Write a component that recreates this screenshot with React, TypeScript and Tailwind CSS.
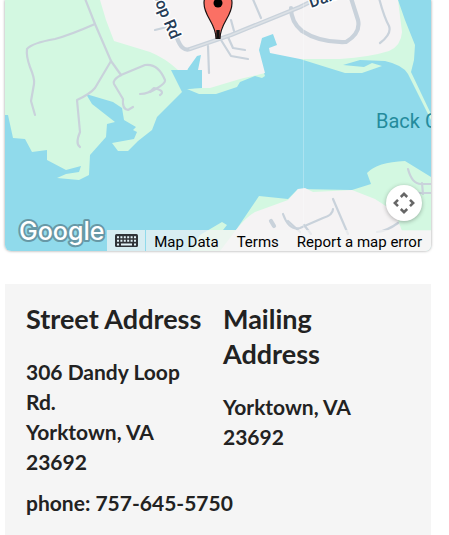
const roads = [
  'M84 -4 L95 24 L111 61 L121 75',
  'M95 24 Q70 35 55 39 Q32 43 27 49 Q26 56 30 67 Q35 79 34 84 L31 101 L35 115',
  'M111 61 L95 88 Q90 94 77 100 L80 132 Q75 144 80 147',
  'M121 75 L145 65 Q158 63 165 80 Q166 84 150 92',
  'M121 75 Q112 80 114 84 L123 99 Q122 109 128 110 L133 107',
  'M140 94 Q149 94 154 88 Q166 91 160 95',
  'M155 30 L167 27',
  'M208 46 L209 73',
  'M221 40 L231 56 L248 59',
  'M228 37 L233 48 L245 50',
  'M252 -3 L261 18',
  'M231 20 L234 31',
  'M379 -2 Q384 17 389 26 Q392 34 380 43',
  'M288 221 L300 232',
  'M283 214 Q289 231 300 228 L323 218 Q333 215 333 209',
  'M333 199 L348 234',
  'M304 225 L311 234',
  'M408 169 Q412 184 421 184 L432 184',
  'M417 193 L432 193 M422 183 L423 194',
  'M398 223 Q387 231 377 232',
];

function MapDrawing() {
  return (
    <svg
      className="absolute inset-0 h-full w-full"
      viewBox="5 0 426 251"
      preserveAspectRatio="xMidYMin slice"
      role="img"
      aria-label="Map of Dandy Loop Road, Yorktown"
    >
      <rect x="5" width="426" height="251" fill="#90daeb" />
      <g fill="#d3f8e1">
        <path d="M5 0H190V60L182 92L157 117L152 130L138 141L128 151L118 151L112 143L134 139L137 132L133 130L136 127L124 120L122 108L113 102L86 94L92 104L115 122L107 124L106 137L90 155L89 175L79 180L57 178L66 174L79 172L81 166L66 170L47 160L47 150L32 152L25 139L13 138L8 115H5Z" />
        <path d="M187 89L210 86L240 78L263 70L265 76L262 78L255 76L240 82L237 87L216 94L199 94Z" />
        <path d="M300 59L360 50L392 0H398L405 20L415 45L414 60L411 72L431 114V120L408 74Q403 65 385 61L360 60L343 65L364 67L372 63L382 66L362 73L345 73Z" />
        <path d="M200 235L222 222L227 225L223 230L236 230L259 196L288 199L298 189L352 190L371 184L367 173Q377 162 405 161L431 177V251H190Z" />
      </g>
      <g fill="#f5f3f4">
        <path d="M100 0L106 20L114 41L150 52Q165 58 178 70H187L197 56L201 55L198 70L202 88L210 88L240 79L265 73L259 50L262 38L273 34L277 45L269 48L270 53L300 59H340Q370 57 389 51Q401 46 402 32L398 0Z" />
        <path d="M236 230Q246 217 255 212L288 200L298 189L305 188L313 192L352 190L375 199L395 212L402 231H431V251H220Z" />
      </g>
      <path d="M171 70H187L202 70V88L187 89L182 92Z" fill="#90daeb" />
      <g fill="none" stroke="#c9d2db" strokeWidth="2.2" strokeLinecap="round" strokeLinejoin="round">
        {roads.map((d) => (
          <path key={d} d={d} />
        ))}
        <g strokeWidth="4.2">
          <path d="M177 38Q182 52 190 49L231 35L300 7L318 -2" />
          <path d="M291 8Q291 22 302 31Q320 43 346 42Q361 33 358 20L351 -2" />
          <path d="M271 221L274 226" />
        </g>
        <path d="M190 49L231 35L300 7L318 -2" stroke="#dce1e6" strokeWidth="1.5" />
      </g>
      <path d="M303.500 0V251" stroke="#fff" strokeOpacity=".25" />
      <g
        fill="#263c57"
        stroke="#fff"
        strokeWidth="3"
        strokeLinejoin="round"
        paintOrder="stroke"
        className="font-[Roboto,sans-serif] text-[16px] font-medium"
      >
        <text transform="translate(171 40) rotate(67)" textAnchor="end">Loop Rd</text>
        <text transform="translate(311 8) rotate(-19)">Dandy Loop</text>
      </g>
      <text x="376" y="128" fill="#248b9c" className="font-[Roboto,sans-serif] text-[20px]">
        Back Creek
      </text>
      <path
        d="M216 38.500C216 23 204 17 204 3A14 14 0 0 1 232 3C232 17 220 23 220 38.500Z"
        fill="#fb7064"
        stroke="#1c1414"
        strokeWidth="1.200"
      />
      <path d="M218 30V38.500" stroke="#111" strokeWidth="3.500" />
      <circle cx="218" cy="3" r="4.500" fill="#000" />
      <text
        x="19"
        y="240"
        fill="#fff"
        stroke="#6798a6"
        strokeWidth="4"
        strokeLinejoin="round"
        paintOrder="stroke"
        className="font-[Inter,sans-serif] text-[25px] font-medium"
      >
        Google
      </text>
    </svg>
  );
}

function KeyboardIcon() {
  return (
    <svg width="23" height="14" viewBox="0 0 23 14" aria-hidden="true">
      <rect width="23" height="13" rx="1.500" fill="#303338" />
      <path
        d="M2 3.200H21M2 6.700H21"
        stroke="#e4f3f8"
        strokeWidth="2"
        strokeDasharray="2 1.400"
      />
      <path d="M6 10.500H17" stroke="#e4f3f8" strokeWidth="2" />
      <path d="M2 10.500H4M19 10.500H21" stroke="#e4f3f8" strokeWidth="2" />
    </svg>
  );
}

function CameraIcon() {
  return (
    <svg width="22" height="22" viewBox="-11 -11 22 22" fill="none" stroke="#666" strokeWidth="2.500" aria-hidden="true">
      <path d="M-3.200 -6L0 -9.200L3.200 -6M-3.200 6L0 9.200L3.200 6M-6 -3.200L-9.200 0L-6 3.200M6 -3.200L9.200 0L6 3.200" />
    </svg>
  );
}

function MapPanel() {
  return (
    <section
      aria-label="Map"
      className="relative flex h-[251px] flex-col items-end justify-end overflow-hidden rounded-b-md shadow-[0_0_3px_rgba(0,0,0,0.4)]"
    >
      <MapDrawing />
      <button
        type="button"
        aria-label="Map camera controls"
        className="relative mr-[9px] mb-[9px] flex size-9 items-center justify-center rounded-full bg-white shadow-[0_1px_4px_rgba(0,0,0,0.3)]"
      >
        <CameraIcon />
      </button>
      <div className="relative flex h-[21px] items-stretch font-[Roboto,sans-serif] text-[15px] leading-6 text-black">
        <button
          type="button"
          aria-label="Keyboard shortcuts"
          className="mr-px flex w-[38px] items-center justify-center bg-[#f5f5f5]/70"
        >
          <KeyboardIcon />
        </button>
        <div className="flex gap-[18px] bg-[#f5f5f5]/70 pr-[9px] pl-2 whitespace-nowrap">
          <button type="button">Map Data</button>
          <a href="#terms">Terms</a>
          <a href="#report">Report a map error</a>
        </div>
      </div>
    </section>
  );
}

export default function App() {
  return (
    <main className="bg-white pr-[18px] pl-[5px] font-[Lato,sans-serif] text-[#222]">
      <MapPanel />
      <section className="mt-[33px] bg-[#f5f5f5] px-[21px] pt-[17px] pb-5 text-[21px] leading-[30px] font-bold">
        <div className="grid grid-cols-2 gap-[10px]">
          <div>
            <h2 className="mb-[21px] text-[27px] leading-[35px]">Street Address</h2>
            <address className="not-italic">
              306 Dandy Loop Rd.
              <br />
              Yorktown, VA 23692
            </address>
          </div>
          <div>
            <h2 className="mb-[21px] text-[27px] leading-[35px]">Mailing Address</h2>
            <address className="not-italic">Yorktown, VA 23692</address>
          </div>
        </div>
        <p className="mt-[11px]">phone: 757-645-5750</p>
      </section>
    </main>
  );
}
